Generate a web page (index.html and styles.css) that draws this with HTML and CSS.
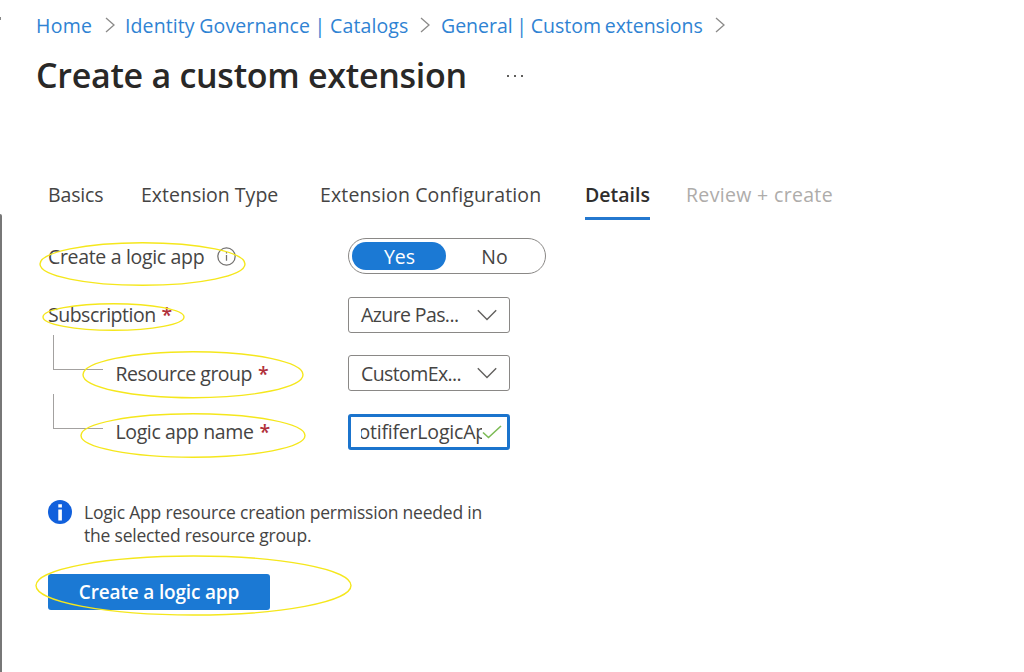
FILE: index.html
```html
<!DOCTYPE html>
<html lang="en">
<head>
<meta charset="utf-8">
<title>Create a custom extension</title>
<link rel="stylesheet" href="styles.css">
</head>
<body>
<div class="page">
  <header class="header">
    <nav class="breadcrumb">
      <a class="crumb crumb-home">Home</a>
      <svg class="sep" viewBox="0 0 10 16"><path d="M1 1l8 7-8 7"/></svg>
      <a class="crumb crumb-catalogs">Identity Governance | Catalogs</a>
      <svg class="sep" viewBox="0 0 10 16"><path d="M1 1l8 7-8 7"/></svg>
      <a class="crumb crumb-general">General | Custom extensions</a>
      <svg class="sep" viewBox="0 0 10 16"><path d="M1 1l8 7-8 7"/></svg>
    </nav>
    <div class="title-row">
      <h1 class="title">Create a custom extension</h1>
      <svg class="more" viewBox="0 0 18 4"><path d="M1 1h2v2H1zM8 1h2v2H8zM15 1h2v2h-2z"/></svg>
    </div>
  </header>

  <nav class="tabs">
    <a class="tab"><span class="t-basics">Basics</span></a>
    <a class="tab"><span class="t-type">Extension Type</span></a>
    <a class="tab"><span class="t-config">Extension Configuration</span></a>
    <a class="tab tab-active"><span class="t-details">Details</span></a>
    <a class="tab tab-disabled"><span class="t-review">Review + create</span></a>
  </nav>

  <main class="form">
    <div class="row">
      <div class="label"><span class="l-create">Create a logic app</span>
        <svg class="hint" viewBox="0 0 18 18"><circle cx="9" cy="9" r="8.2"/><path d="M9 7.5v5.5M9 4.8v1.4"/></svg>
      </div>
      <div class="toggle"><span class="option option-on">Yes</span><span class="option">No</span></div>
    </div>
    <div class="row">
      <div class="label"><span class="l-sub">Subscription</span><b class="req">*</b></div>
      <div class="select"><span class="v-sub">Azure Pas...</span><svg class="chevron" viewBox="0 0 20 12"><path d="M.8 1.2L10 10.4l9.200-9.200"/></svg></div>
    </div>
    <div class="row row-child">
      <i class="branch"></i>
      <div class="label"><span class="l-group">Resource group</span><b class="req">*</b></div>
      <div class="select"><span class="v-group">CustomEx...</span><svg class="chevron" viewBox="0 0 20 12"><path d="M.8 1.2L10 10.4l9.200-9.200"/></svg></div>
    </div>
    <div class="row row-child">
      <i class="branch"></i>
      <div class="label"><span class="l-name">Logic app name</span><b class="req">*</b></div>
      <div class="input"><div class="clip"><span class="v-name">otififerLogicAp</span></div><svg class="check" viewBox="0 0 20 14"><path d="M1 7.500l5.500 5L19 1"/></svg></div>
    </div>
  </main>

  <section class="notice">
    <svg class="info" viewBox="0 0 24 24"><circle cx="12" cy="12" r="12"/><path d="M10.300 9.500h3.600v11h-3.600zM10.300 4.300h3.600v3.200h-3.600z"/></svg>
    <p class="notice-text">Logic App resource creation permission needed in<br>the selected resource group.</p>
  </section>

  <button class="primary">Create a logic app</button>

  <svg class="marks" viewBox="0 0 1024 672">
    <ellipse cx="142.500" cy="264" rx="102.500" ry="21.300"/>
    <ellipse cx="113.500" cy="317" rx="70.500" ry="13.300"/>
    <ellipse cx="193" cy="374.700" rx="110" ry="23"/>
    <ellipse cx="193" cy="435.500" rx="112" ry="21.700"/>
    <ellipse cx="193.500" cy="585.500" rx="157.500" ry="29.500"/>
  </svg>
  <i class="edge"></i>
  <i class="speck"></i>
</div>
</body>
</html>
```
FILE: styles.css
```css
* { box-sizing: border-box; }
body { margin: 0; background: #fff; }
.page {
  position: relative;
  width: 1024px;
  height: 672px;
  overflow: hidden;
  font-family: "Open Sans", "Noto Sans", sans-serif;
  font-size: 19.5px;
  color: #454443;
  white-space: nowrap;
}
.header { padding: 10px 0 0 36px; }
.breadcrumb { display: flex; align-items: center; height: 30px; }
.crumb { color: #2f83d3; }
.crumb-home { width: 69px; letter-spacing: .3px; }
.crumb-catalogs { width: 284px; margin-left: 10px; letter-spacing: .1px; word-spacing: -.5px; }
.crumb-general { width: 263px; margin-left: 11px; letter-spacing: -.02px; word-spacing: -1.3px; }
.crumb-catalogs + .sep { margin-left: 11px; }
.crumb-general + .sep { margin-left: 11px; }
.sep { width: 10px; height: 16px; fill: none; stroke: #8b8a89; stroke-width: 1.3; flex: none; }
.title-row { display: flex; align-items: center; height: 50px; margin-top: 11px; }
.title { margin: 0; width: 470px; font-size: 34px; line-height: 48px; padding-bottom: 2px; font-weight: 600; color: #292827; letter-spacing: -.28px; }
.more { width: 18px; height: 4px; fill: #605e5c; }

.tabs {
  display: grid;
  grid-template-columns: 93px 179px 265px 101px 160px;
  height: 50px;
  margin-top: 69px;
  padding-left: 48px;
}
.tab { line-height: 50px; height: 50px; }
.t-basics { letter-spacing: -.15px; }
.t-config { letter-spacing: .13px; }
.t-review { letter-spacing: .33px; }
.tab-active { width: 65px; font-weight: 600; border-bottom: 3px solid #2478cf; color: #2f2e2d; }
.tab-disabled { color: #aeacaa; }

.form { display: flex; flex-direction: column; gap: 22.6px; padding: 18px 0 0 48px; }
.row { display: grid; grid-template-columns: 300px auto; height: 36px; justify-content: start; }
.row-child { grid-template-columns: 67.5px 232.5px auto; }
.label { display: flex; align-items: center; }
.l-create { letter-spacing: -.33px; }
.l-sub { letter-spacing: -.5px; }
.l-group { letter-spacing: -.5px; }
.l-name { letter-spacing: -.38px; }
.v-sub, .v-group { letter-spacing: -.6px; }
.v-name { letter-spacing: -.2px; margin-right: -5px; }
.hint { width: 19px; height: 19px; margin-left: 13px; fill: none; stroke: #73716f; stroke-width: 1.2; }
.req { margin-left: 6px; font-weight: 600; color: #b0303a; }
.branch {
  width: 50px;
  height: 35px;
  margin: -20px 0 0 5px;
  border: solid #a3a1a0;
  border-width: 0 0 1.500px 1.500px;
}
.toggle {
  display: flex;
  width: 198px;
  height: 36px;
  padding: 3px;
  border: 1px solid #8a8886;
  border-radius: 18px;
}
.option { flex: 1; height: 28px; line-height: 29px; padding-left: 1px; text-align: center; border-radius: 14px; }
.option-on { flex: none; width: 94px; background: #1b79d4; color: #fff; }
.select, .input {
  display: flex;
  align-items: center;
  justify-content: space-between;
  width: 162px;
  height: 36px;
  padding: 0 12px;
  border: 1.500px solid #8a8886;
  border-radius: 3px;
}
.chevron { width: 20px; height: 12px; fill: none; stroke: #62605e; stroke-width: 1.4; }
.input { border: 3px solid #1b74cd; padding: 0 5px 0 10px; }
.clip { display: flex; justify-content: flex-end; width: 121px; overflow: hidden; }
.check { width: 20px; height: 14px; flex: none; fill: none; stroke: #7cbb55; stroke-width: 1.6; }

.notice { display: flex; margin-top: 49px; padding-left: 48px; }
.info { width: 24px; height: 24px; margin-top: 1px; flex: none; }
.info circle { fill: #1160dc; }
.info path { fill: #fff; }
.notice-text { margin: 2px 0 0 12px; font-size: 17.5px; line-height: 23px; letter-spacing: -.21px; }
.primary {
  display: block;
  width: 222px;
  height: 36px;
  margin: 27px 0 0 48px;
  padding: 0;
  border: 0;
  border-radius: 3px;
  background: #1b79d4;
  color: #fff;
  font: 600 19px/36px "Open Sans", "Noto Sans", sans-serif;
  letter-spacing: -.17px;
}
.marks { position: absolute; inset: 0; width: 1024px; height: 672px; fill: none; stroke: #f5e71c; stroke-width: 1.4; }
.edge { position: absolute; left: 0; top: 214px; bottom: 0; width: 1.500px; background: #777; border-radius: 0 2px 0 0; }
.speck { position: absolute; left: 0; top: 17px; width: 1px; height: 3px; background: #888; }
```
